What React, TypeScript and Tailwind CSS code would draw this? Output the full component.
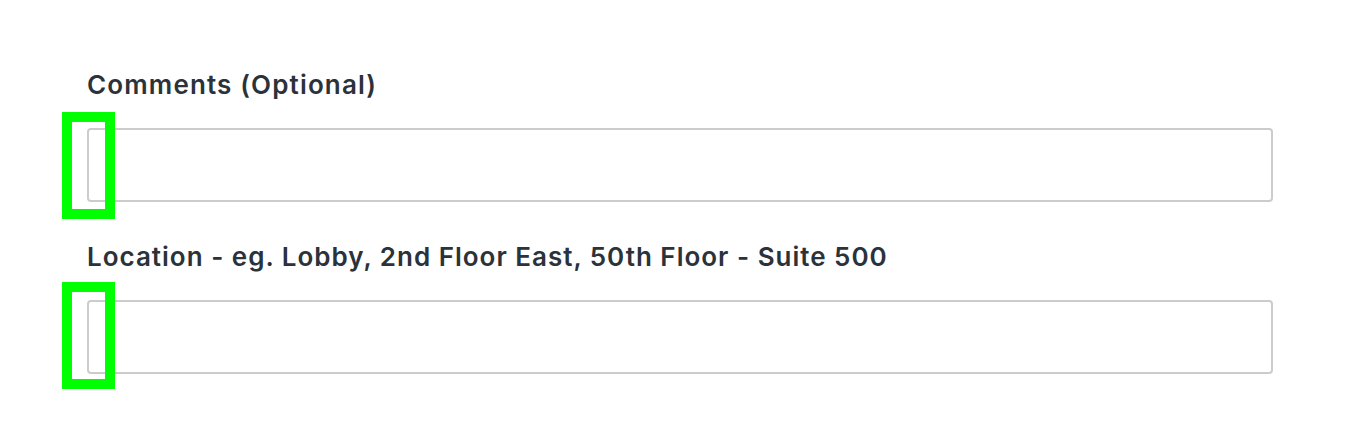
export default function App() {
  return (
    <div className="relative w-[1358px] h-[447px] bg-white overflow-hidden" style={{ fontFamily: 'Inter, "Liberation Sans", sans-serif' }}>
      <form className="flex flex-col pl-[87px] pr-[85px] pt-[70px]">
        {/* Comments */}
        <label className="text-[26px] leading-[30px] font-semibold tracking-[1.15px] text-[#2b323a] h-[30px] whitespace-nowrap">
          Comments (Optional)
        </label>
        <input
          type="text"
          className="mt-[28px] h-[74px] w-full rounded-[4px] border-2 border-[#cccccc] bg-white px-3 outline-none"
        />

        {/* Location */}
        <label className="mt-[40px] text-[26px] leading-[30px] font-semibold tracking-[1px] text-[#2b323a] h-[30px] whitespace-nowrap">
          Location - eg. Lobby, 2nd Floor East, 50th Floor - Suite 500
        </label>
        <input
          type="text"
          className="mt-[28px] h-[74px] w-full rounded-[4px] border-2 border-[#cccccc] bg-white px-3 outline-none"
        />
      </form>

      {/* highlight markers */}
      <div className="absolute left-[62px] top-[112px] w-[53px] h-[107px] border-[10px] border-[#00ff00]" />
      <div className="absolute left-[62px] top-[282px] w-[53px] h-[107px] border-[10px] border-[#00ff00]" />
    </div>
  )
}
